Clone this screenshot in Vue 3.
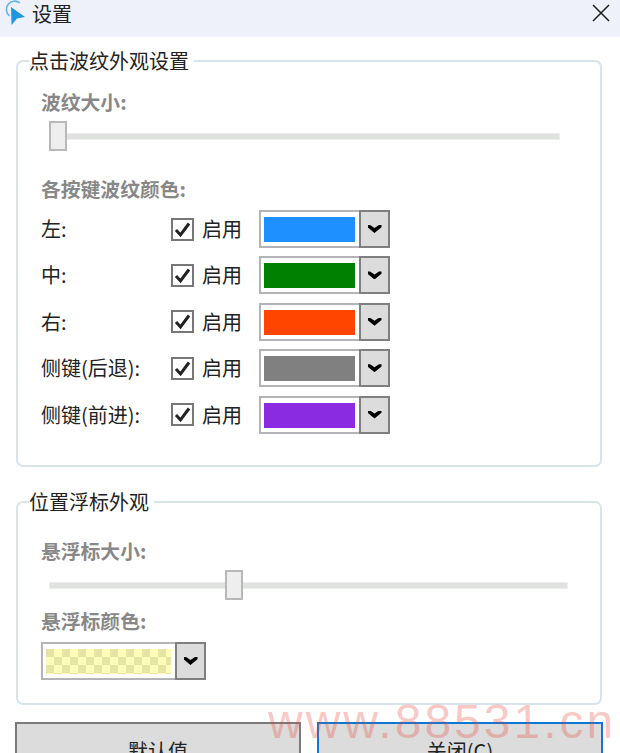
<script setup>
const rows = [
  { label: '左:', color: '#1e90ff' },
  { label: '中:', color: '#008000' },
  { label: '右:', color: '#ff4500' },
  { label: '侧键(后退):', color: '#808080' },
  { label: '侧键(前进):', color: '#8a2be2' },
]
</script>

<template>
  <div class="window">
    <header class="titlebar">
      <svg class="logo" width="28" height="28" viewBox="0 0 28 28">
        <path d="M9.5 17 A8 8 0 1 1 20 4" fill="none" stroke="#5cb5ee" stroke-width="1.6" />
        <path d="M11 8 L25 18 L17 19.5 L11.5 26 Z" fill="#1f97e0" />
      </svg>
      <span class="title">设置</span>
      <svg class="close" width="18" height="18" viewBox="0 0 18 18">
        <path d="M1 1 L17 17 M17 1 L1 17" stroke="#1c1c1c" stroke-width="1.5" fill="none" />
      </svg>
    </header>

    <main class="content">
      <fieldset class="group first">
        <legend>点击波纹外观设置</legend>
        <div class="caption">波纹大小:</div>
        <div class="slider size-slider">
          <span class="thumb thumb-start"></span>
        </div>
        <div class="caption colors-caption">各按键波纹颜色:</div>
        <div class="rows">
          <div v-for="row in rows" :key="row.label" class="row">
            <span class="row-label">{{ row.label }}</span>
            <span class="checkbox">
              <svg width="17" height="17" viewBox="0 0 17 17">
                <path d="M2 9 L6.5 14 L15 2.5" fill="none" stroke="#222" stroke-width="3" />
              </svg>
            </span>
            <span class="enable">启用</span>
            <div class="combo">
              <div class="combo-field">
                <span class="swatch" :style="{ background: row.color }"></span>
              </div>
              <span class="combo-btn"><i class="chevron"></i></span>
            </div>
          </div>
        </div>
      </fieldset>

      <fieldset class="group second">
        <legend>位置浮标外观</legend>
        <div class="caption">悬浮标大小:</div>
        <div class="slider float-slider">
          <span class="thumb thumb-mid"></span>
        </div>
        <div class="caption float-caption">悬浮标颜色:</div>
        <div class="combo wide">
          <div class="combo-field">
            <span class="swatch checker"></span>
          </div>
          <span class="combo-btn"><i class="chevron"></i></span>
        </div>
      </fieldset>

      <div class="actions">
        <button class="btn" type="button">默认值</button>
        <button class="btn primary" type="button">关闭(C)</button>
      </div>
    </main>

    <div class="watermark">www.88531.cn</div>
  </div>
</template>

<style scoped>
.window {
  position: relative;
  width: 620px;
  height: 753px;
  overflow: hidden;
  background: #fff;
  font-family: "Noto Sans CJK SC", "Liberation Sans", sans-serif;
  color: #222;
}
.titlebar {
  display: flex;
  align-items: center;
  height: 37px;
  background: #eef1f9;
}
.logo {
  flex: none;
  margin-top: -1px;
  margin-right: 4px;
  align-self: flex-start;
}
.title {
  font-size: 20px;
  line-height: 26px;
  margin-top: -10px;
}
.close {
  margin-left: auto;
  margin-right: 10px;
  margin-top: -11px;
}
.content {
  padding: 0 16px;
}
.group {
  margin: 0;
  padding: 0;
  border: 2px solid #d9e3ea;
  border-radius: 7px;
  width: 586px;
  box-sizing: border-box;
}
.first {
  margin-top: 11px;
  height: 419px;
}
.second {
  margin-top: 22px;
  height: 216px;
}
legend {
  margin-left: 11px;
  padding: 0 5px 0 0;
  font-size: 20px;
  line-height: 26px;
  color: #222;
}
.caption {
  margin-left: 23px;
  font-size: 19.8px;
  line-height: 24px;
  font-weight: 700;
  color: #888;
}
.first > .caption:first-of-type {
  margin-top: 16px;
}
.second > .caption:first-of-type {
  margin-top: 24px;
}
.slider {
  position: relative;
  height: 7px;
  margin-left: 31px;
  background: #e0e2e0;
  border: 1px solid #eceeec;
  box-sizing: border-box;
}
.size-slider {
  width: 511px;
  margin-top: 19px;
}
.float-slider {
  width: 519px;
  margin-top: 19px;
}
.thumb {
  position: absolute;
  top: -13px;
  width: 18px;
  height: 30px;
  box-sizing: border-box;
  background: #eeeeee;
  border: 2px solid #b8b8b8;
}
.thumb-start {
  left: -1px;
}
.thumb-mid {
  left: 175px;
}
.colors-caption {
  margin-top: 37px;
}
.float-caption {
  margin-top: 20px;
}
.rows {
  display: flex;
  flex-direction: column;
  gap: 8.4px;
  margin-top: 9px;
}
.row {
  display: flex;
  align-items: center;
  height: 38px;
  padding-left: 23px;
}
.row-label {
  width: 130px;
  font-size: 20px;
  line-height: 24px;
  color: #222;
}
.checkbox {
  display: flex;
  align-items: center;
  justify-content: center;
  width: 23px;
  height: 23px;
  box-sizing: border-box;
  border: 2px solid #777;
}
.enable {
  margin-left: 8px;
  width: 57px;
  font-size: 20px;
  line-height: 24px;
}
.combo {
  display: flex;
  width: 131px;
  height: 38px;
  box-sizing: border-box;
}
.combo.wide {
  width: 165px;
  margin: 9px 0 0 23px;
}
.combo-field {
  flex: 1;
  display: flex;
  box-sizing: border-box;
  padding: 5px 3px 4px;
  background: #fff;
  border: 2px solid #b4b4b8;
  border-right: none;
}
.swatch {
  flex: 1;
  margin-right: 1px;
}
.checker {
  background-color: #fdfdb9;
  background-image: conic-gradient(#e4e4a4 25%, transparent 0 50%, #e4e4a4 0 75%, transparent 0);
  background-size: 16px 16px;
  background-position: 8px 0;
}
.combo-btn {
  flex: none;
  display: flex;
  align-items: center;
  justify-content: center;
  width: 31px;
  box-sizing: border-box;
  background: #dcdcdc;
  border: 2px solid #7f7f7f;
}
.chevron {
  display: block;
  width: 14px;
  height: 8px;
  background: #000;
  clip-path: polygon(0 0, 18% 0, 50% 38%, 82% 0, 100% 0, 100% 28%, 50% 100%, 0 28%);
}
.actions {
  display: flex;
  gap: 16px;
  margin-top: 17px;
  margin-left: -1px;
}
.btn {
  width: 286px;
  height: 50px;
  padding: 8px 0 0;
  box-sizing: border-box;
  background: #dcdcdc;
  border: 2px solid #7a7a7a;
  font: inherit;
  font-size: 20px;
  line-height: 26px;
  color: #222;
  text-align: center;
  align-self: flex-start;
  display: block;
}
.primary {
  border-color: #0f78d4;
}
.watermark {
  position: absolute;
  left: 268px;
  top: 692px;
  font-family: "Liberation Sans", sans-serif;
  font-size: 48px;
  line-height: 60px;
  letter-spacing: 3px;
  white-space: nowrap;
  color: rgba(232, 60, 50, 0.28);
  pointer-events: none;
}
</style>
